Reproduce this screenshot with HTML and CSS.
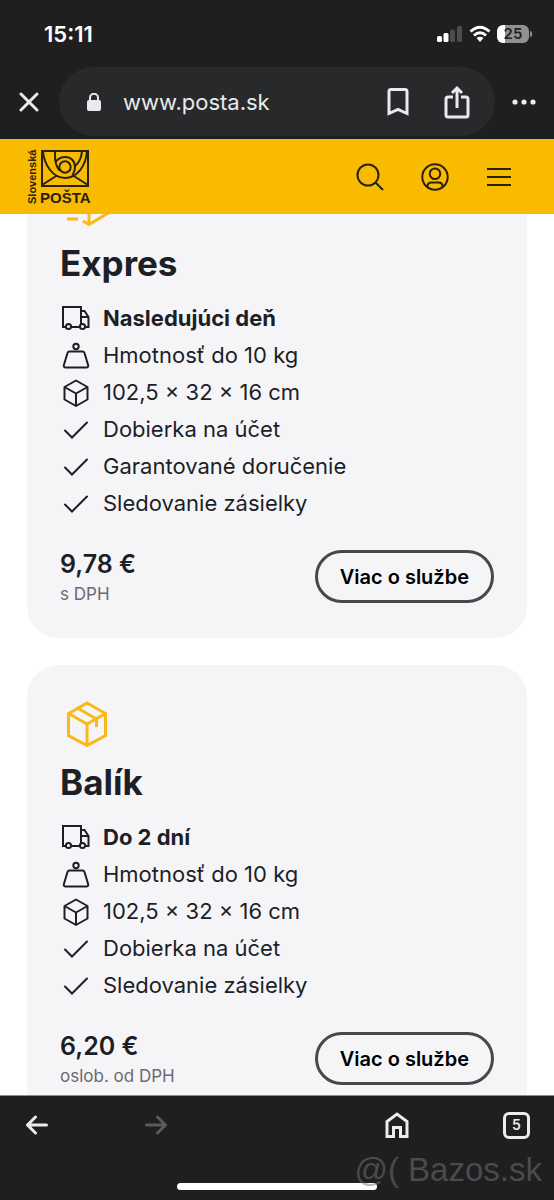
FILE: index.html
```html
<!DOCTYPE html>
<html lang="sk">
<head>
<meta charset="utf-8">
<meta name="viewport" content="width=device-width, initial-scale=1">
<title>Slovenská pošta</title>
<link rel="stylesheet" href="styles.css">
</head>
<body>
<svg class="sprite" aria-hidden="true">
  <symbol id="truck" viewBox="0 0 30 26">
    <g fill="none" stroke="currentColor" stroke-width="2">
      <path d="M5 22H2V2h18v20H10M20 6h3.500l4 6v10h-3M20 12h7"/>
      <circle cx="7.500" cy="21.500" r="2.600" fill="#f5f5f8"/><circle cx="21.500" cy="21.500" r="2.600" fill="#f5f5f8"/>
    </g>
  </symbol>
  <symbol id="weight" viewBox="0 0 30 26">
    <g fill="none" stroke="currentColor" stroke-width="2">
      <circle cx="15" cy="3.500" r="2.700"/>
      <path d="M8.500 8.500h13q1.500 0 2 1.500l3.600 12q.6 2.500-1.900 2.500H4.800q-2.500 0-1.900-2.500L6.500 10q.5-1.500 2-1.500z"/>
    </g>
  </symbol>
  <symbol id="cube" viewBox="0 0 30 28">
    <path d="M15 1.500 26.500 8v12.500L15 27 3.500 20.500V8zM3.500 8 15 14.500 26.500 8M15 14.500V27" fill="none" stroke="currentColor" stroke-width="2" stroke-linejoin="round"/>
  </symbol>
  <symbol id="check" viewBox="0 0 30 26">
    <path d="m4 13.500 7 7L26 5.500" fill="none" stroke="currentColor" stroke-width="2" stroke-linecap="round"/>
  </symbol>
</svg>

<header class="browser-top">
  <div class="status">
    <time class="clock">15:11</time>
    <div class="indicators">
      <svg width="26" height="18" viewBox="0 0 26 18" fill="#fff"><rect y="11" width="5" height="6" rx="1.500"/><rect x="6.500" y="8" width="5" height="9" rx="1.500"/><rect x="13" y="4.500" width="5" height="12.500" rx="1.500" fill="#4c4c4c"/><rect x="20" y="1" width="5" height="16" rx="1.500" fill="#4c4c4c"/></svg>
      <svg width="22" height="18" viewBox="0 0 22 18"><g fill="none" stroke="#fff" stroke-width="3"><path d="M1.500 6.500q9.500-8.500 19 0M5 10.500q6-5.400 12 0"/></g><path d="M7.500 13q3.500-2.700 7 0L11 17z" fill="#fff"/></svg>
      <span class="battery">25</span>
    </div>
  </div>
  <div class="address-row">
    <button class="icon-btn" aria-label="Zavrieť"><svg width="20" height="20" viewBox="0 0 20 20"><path d="m2 2 16 16M18 2 2 18" stroke="#ececee" stroke-width="3" stroke-linecap="round"/></svg></button>
    <div class="address">
      <svg width="14" height="18" viewBox="0 0 14 18"><rect y="7" width="14" height="11" rx="2" fill="#e8eaed"/><path d="M3 8V4.800a4 4 0 0 1 8 0V8" fill="none" stroke="#e8eaed" stroke-width="2"/></svg>
      <span class="url">www.posta.sk</span>
      <button class="icon-btn" aria-label="Záložka"><svg width="22" height="28" viewBox="0 0 22 28"><path d="M2 3.500q0-2 2-2h14q2 0 2 2v22L11 21.500l-9 4z" fill="none" stroke="#e8eaed" stroke-width="3"/></svg></button>
      <button class="icon-btn" aria-label="Zdieľať"><svg width="26" height="34" viewBox="0 0 26 34"><path d="M9 12H4q-2 0-2 2v16q0 2 2 2h18q2 0 2-2V14q0-2-2-2h-5M13 23V3M8 8l5-5 5 5" fill="none" stroke="#e8eaed" stroke-width="3"/></svg></button>
    </div>
    <button class="icon-btn" aria-label="Viac"><svg width="24" height="6" viewBox="0 0 24 6" fill="#ececee"><circle cx="3" cy="3" r="2.600"/><circle cx="12" cy="3" r="2.600"/><circle cx="21" cy="3" r="2.600"/></svg></button>
  </div>
</header>

<nav class="site-bar">
  <a class="logo" href="#" aria-label="Slovenská pošta">
    <svg width="64" height="56" viewBox="0 0 64 56">
      <text class="logo-side" transform="translate(9 55) rotate(-90)">Slovenská</text>
      <text class="logo-name" x="13" y="54">POŠTA</text>
      <g fill="none" stroke="#29220e" stroke-width="2">
        <rect x="15" y="2" width="46" height="35"/>
        <path d="M15 36 30 26.500M61 36 46 26.500"/>
        <path d="M16 2C17 16 26 29 38 29S59 17 60 2"/>
        <circle cx="38" cy="18" r="5.700"/>
        <path d="M28 2v5q0 9 4.500 14.500M29 12.500Q32.500 8 38 8c6 0 10 4 10 10q0 4-2.500 8"/>
        <path d="M48 17C53 13 54.500 9 55 2"/>
      </g>
    </svg>
  </a>
  <button class="icon-btn" aria-label="Hľadať"><svg width="28" height="28" viewBox="0 0 28 28"><g fill="none" stroke="#29220e" stroke-width="2"><circle cx="12" cy="12" r="10.500"/><path d="m19 19 8 8"/></g></svg></button>
  <button class="icon-btn" aria-label="Účet"><svg width="28" height="28" viewBox="0 0 28 28"><g fill="none" stroke="#29220e" stroke-width="2"><circle cx="14" cy="14" r="12.700"/><circle cx="14" cy="10.800" r="5.300"/><path d="M6.500 24.500v-1q0-4 4-4h7q4 0 4 4v1"/></g></svg></button>
  <button class="icon-btn" aria-label="Menu"><svg width="26" height="20" viewBox="0 0 26 20"><path d="M1 2h24M1 10h24M1 18h24" stroke="#29220e" stroke-width="2"/></svg></button>
</nav>

<main class="page">
  <div class="services">
    <article class="card">
      <svg class="card-icon" viewBox="0 0 54 54"><path d="M7 41h11M10 31h8M23 43l6 3.500 20-12V12L29 1 9 12l20 11 20-11M29 23v23" fill="none" stroke="#f9b917" stroke-width="3"/></svg>
      <h2>Expres</h2>
      <ul class="features">
        <li class="lead"><svg><use href="#truck"/></svg>Nasledujúci deň</li>
        <li><svg><use href="#weight"/></svg>Hmotnosť do 10 kg</li>
        <li><svg><use href="#cube"/></svg>102,5 × 32 × 16 cm</li>
        <li><svg><use href="#check"/></svg>Dobierka na účet</li>
        <li><svg><use href="#check"/></svg>Garantované doručenie</li>
        <li><svg><use href="#check"/></svg>Sledovanie zásielky</li>
      </ul>
      <div class="offer">
        <div><p class="price">9,78 €</p><p class="note">s DPH</p></div>
        <button class="more">Viac o službe</button>
      </div>
    </article>

    <article class="card">
      <svg class="card-icon" viewBox="0 0 54 54"><path d="M27 6 45.500 16.500v22L27 48.500 8.500 38.500v-22zM8.500 16.500 27 27l18.500-10.500M27 27v21.500M17.500 11 36.500 22v8" fill="none" stroke="#f9b917" stroke-width="3"/></svg>
      <h2>Balík</h2>
      <ul class="features">
        <li class="lead"><svg><use href="#truck"/></svg>Do 2 dní</li>
        <li><svg><use href="#weight"/></svg>Hmotnosť do 10 kg</li>
        <li><svg><use href="#cube"/></svg>102,5 × 32 × 16 cm</li>
        <li><svg><use href="#check"/></svg>Dobierka na účet</li>
        <li><svg><use href="#check"/></svg>Sledovanie zásielky</li>
      </ul>
      <div class="offer">
        <div><p class="price">6,20 €</p><p class="note">oslob. od DPH</p></div>
        <button class="more">Viac o službe</button>
      </div>
    </article>
  </div>
</main>

<footer class="browser-bottom">
  <div class="tools">
    <button class="icon-btn" aria-label="Späť"><svg width="24" height="20" viewBox="0 0 24 20"><path d="M21.500 10H2.500M10.500 2l-8 8 8 8" fill="none" stroke="#ececee" stroke-width="3" stroke-linecap="round" stroke-linejoin="round"/></svg></button>
    <button class="icon-btn forward" aria-label="Dopredu"><svg width="24" height="20" viewBox="0 0 24 20"><path d="M2.500 10h19M13.500 2l8 8-8 8" fill="none" stroke="#5b5b5f" stroke-width="3" stroke-linecap="round" stroke-linejoin="round"/></svg></button>
    <button class="icon-btn" aria-label="Domov"><svg width="24" height="28" viewBox="0 0 24 28"><path d="M2 25.500V10.500L12 3l10 7.500v15h-6.500v-9h-7v9z" fill="none" stroke="#ececee" stroke-width="3"/></svg></button>
    <button class="tabs" aria-label="Karty: 5">5</button>
  </div>
  <div class="home-bar"></div>
  <span class="watermark">@( Bazos.sk</span>
</footer>
</body>
</html>
```
FILE: styles.css
```css
* { box-sizing: border-box; }

body {
  display: flex;
  flex-direction: column;
  height: 100vh;
  margin: 0;
  overflow: hidden;
  background: #fff;
  color: #1c1f26;
  font-family: Inter, "Liberation Sans", sans-serif;
}

h2, p, ul { margin: 0; padding: 0; }
svg { display: block; flex: none; }
button { font: inherit; color: inherit; cursor: pointer; }
.sprite { position: absolute; width: 0; height: 0; }

.icon-btn {
  display: flex;
  padding: 0;
  border: 0;
  background: none;
}

/* Browser chrome, top */
.browser-top {
  flex: none;
  padding-bottom: 3px;
  background: #1f1f1f;
}

.status {
  display: flex;
  align-items: center;
  justify-content: space-between;
  height: 67px;
  padding: 0 25px 0 44px;
  color: #fff;
}

.clock { font-size: 22px; font-weight: 600; }
.indicators { display: flex; align-items: center; gap: 6px; }

.battery {
  position: relative;
  width: 32px;
  border-radius: 6px;
  background: linear-gradient(90deg, #fff 25%, #919191 25%);
  color: #1f1f1f;
  font-size: 15px;
  font-weight: 600;
  line-height: 18px;
  text-align: center;
}

.battery::after {
  content: "";
  position: absolute;
  top: 6px;
  right: -3px;
  width: 2px;
  height: 6px;
  border-radius: 0 2px 2px 0;
  background: #919191;
}

.address-row {
  display: flex;
  align-items: center;
  padding: 0 18px 0 19px;
}

.address {
  display: flex;
  flex: 1;
  align-items: center;
  height: 69px;
  margin: 0 17px 0 20px;
  padding: 0 25px 0 28px;
  border-radius: 35px;
  background: #28292b;
}

.url {
  flex: 1;
  padding-left: 22px;
  color: #e8eaed;
  font-size: 22px;
}

.address .icon-btn + .icon-btn { margin-left: 35px; }

/* Site header */
.site-bar {
  display: flex;
  flex: none;
  align-items: center;
  gap: 37px;
  height: 75px;
  padding: 0 42px 0 27px;
  background: #f9bb00;
}

.logo { margin-right: auto; }

.logo text {
  fill: #29220e;
  font-family: "Liberation Sans", sans-serif;
  font-weight: 700;
}

.logo-side { font-size: 11px; }
.logo-name { font-size: 15px; }

/* Service cards */
.page {
  flex: 1;
  min-height: 0;
  overflow: hidden;
}

.services {
  display: grid;
  gap: 27px;
  margin-top: -68px;
  padding: 0 27px;
}

.card {
  padding: 32px 33px 30px;
  border-radius: 32px;
  background: #f5f5f8;
}

.card-icon { width: 54px; height: 54px; }

h2 {
  margin: 6px 0 11px;
  font-size: 35px;
  font-weight: 700;
  line-height: 50px;
}

.features {
  padding-left: 1px;
  list-style: none;
}

.features li {
  display: flex;
  align-items: center;
  gap: 12px;
  font-size: 22px;
  line-height: 37px;
}

.features .lead { font-weight: 700; line-height: 38px; }
.features svg { width: 30px; height: 28px; }

.offer {
  display: flex;
  align-items: flex-start;
  justify-content: space-between;
  margin-top: 26px;
}

.price { font-size: 25px; font-weight: 600; line-height: 32px; }
.note { color: #696b70; font-size: 17px; line-height: 28px; }

.more {
  height: 53px;
  margin-top: 2px;
  padding: 0 22px;
  border: 3px solid #47484a;
  border-radius: 27px;
  background: none;
  color: #000;
  font-size: 20px;
  font-weight: 600;
}

/* Browser chrome, bottom */
.browser-bottom {
  position: relative;
  flex: none;
  height: 105px;
  border-top: 1px solid #8b8b8b;
  background: #1f1f1f;
}

.tools {
  display: flex;
  align-items: center;
  height: 58px;
  padding: 0 24px 0 25px;
}

.forward { margin: 0 auto 0 95px; }

.tabs {
  width: 27px;
  height: 27px;
  margin-left: 94px;
  padding: 0;
  border: 3px solid #ececee;
  border-radius: 6px;
  background: none;
  color: #ececee;
  font-size: 14px;
  font-weight: 600;
  line-height: 20px;
}

.home-bar {
  width: 36%;
  height: 7px;
  margin: 29px auto 0;
  border-radius: 4px;
  background: #fff;
}

.watermark {
  position: absolute;
  right: 12px;
  bottom: 10px;
  color: rgba(120, 120, 120, 0.5);
  font-family: "Liberation Sans", sans-serif;
  font-size: 33px;
  line-height: 40px;
}
```
